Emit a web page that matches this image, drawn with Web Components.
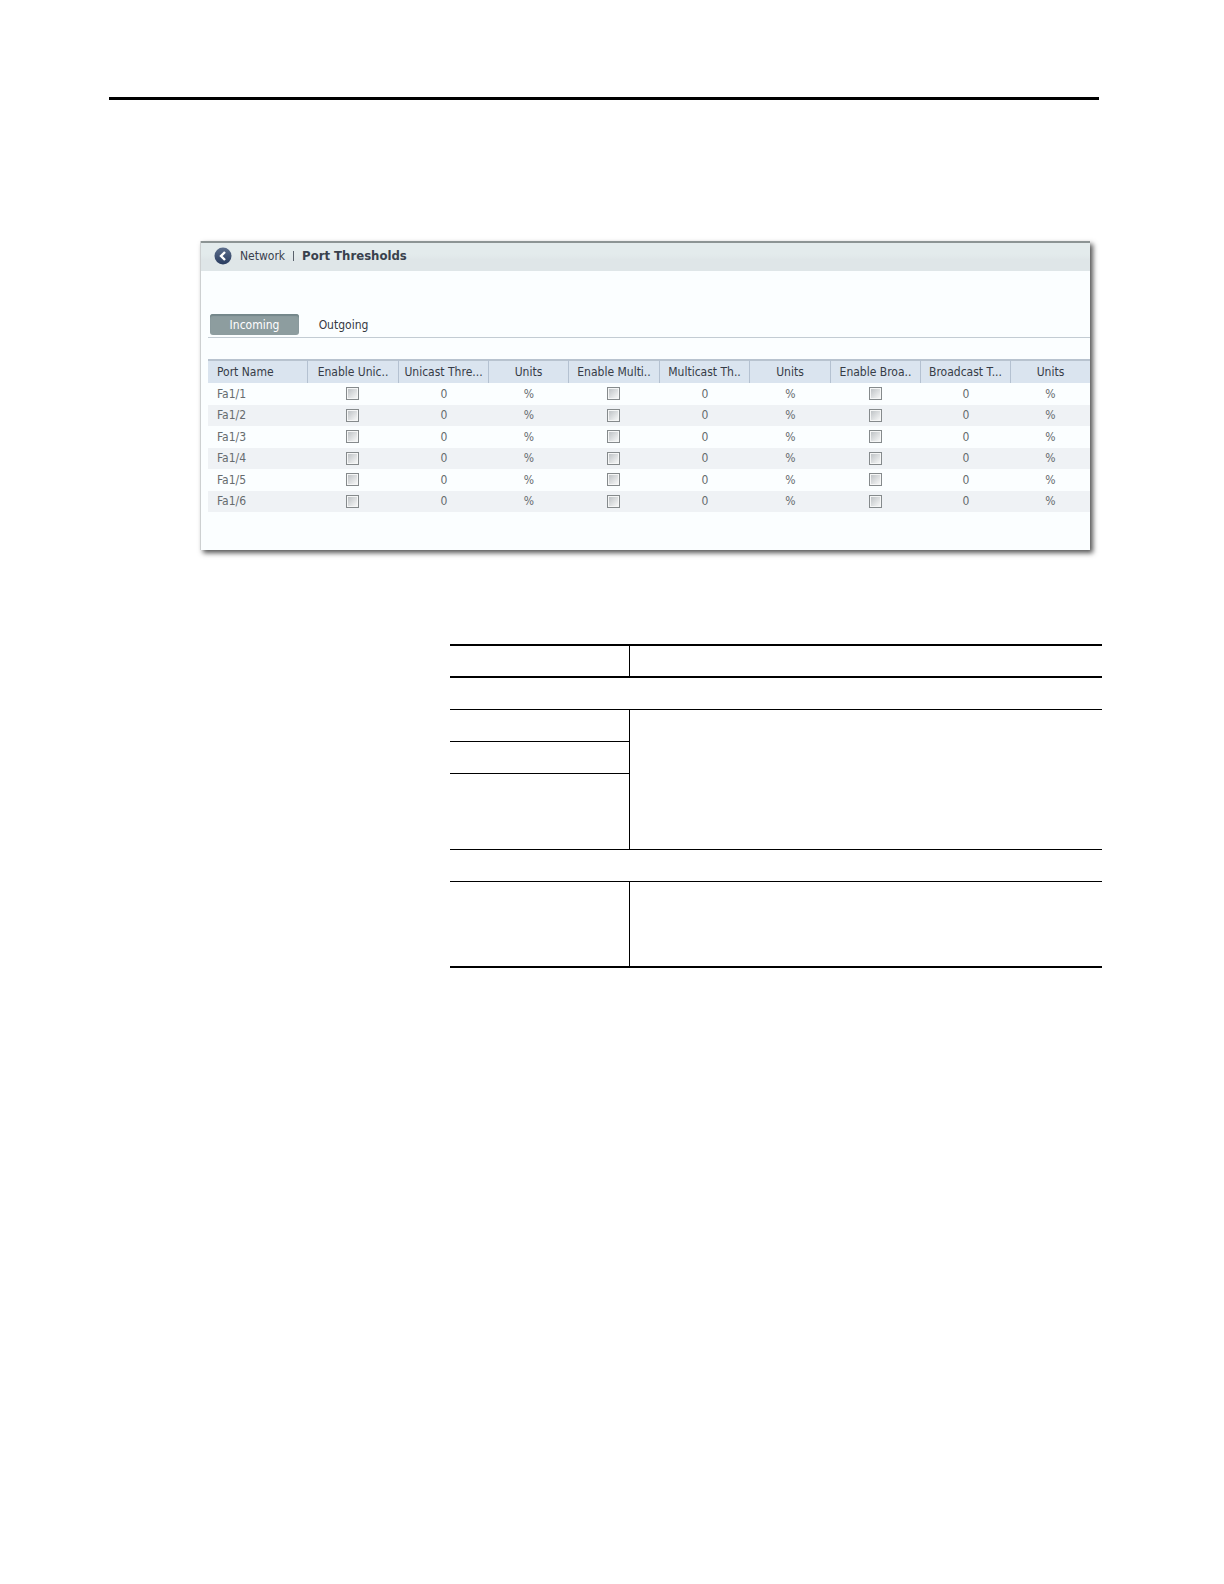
<!DOCTYPE html>
<html lang="en">
<head>
<meta charset="UTF-8">
<meta name="viewport" content="width=device-width, initial-scale=1">
<title>Port Thresholds</title>
<style>
    body {
        margin: 0;
        background: #fff;
        font-family: "DejaVu Sans Condensed", "Noto Sans", sans-serif;
    }
</style>
</head>
<body>
<manual-page>
    <threshold-panel>
        <panel-header slot="header" parent="Network">Port Thresholds</panel-header>
        <tab-bar slot="tabs" active="Incoming"></tab-bar>
        <port-table></port-table>
    </threshold-panel>
    <field-table slot="fields"></field-table>
</manual-page>

<script>
class ManualPageComponent extends HTMLElement {

    constructor() {
        super();
        this.attachShadow({ mode: 'open' });
    }

    connectedCallback() {
        this.shadowRoot.innerHTML = `
            <style>
                :host {
                    display: block;
                    padding: 97px 122px 40px 109px;
                }

                hr {
                    height: 3px;
                    margin: 0 3px 141px 0;
                    border: 0;
                    background: #000;
                }

                .panel {
                    margin: 0 12px 94px 91px;
                }

                .fields {
                    margin-left: 341px;
                }
            </style>
            <hr>
            <div class="panel"><slot></slot></div>
            <div class="fields"><slot name="fields"></slot></div>
        `;
    }
}

class ThresholdPanelComponent extends HTMLElement {

    constructor() {
        super();
        this.attachShadow({ mode: 'open' });
    }

    connectedCallback() {
        this.shadowRoot.innerHTML = `
            <style>
                :host {
                    display: block;
                    border-left: 1px solid #cdd0d1;
                    background: #fbfeff;
                    box-shadow: 3px 3px 5px #555;
                }

                .body {
                    padding: 43px 0 38px 7px;
                }
            </style>
            <slot name="header"></slot>
            <div class="body">
                <slot name="tabs"></slot>
                <slot></slot>
            </div>
        `;
    }
}

class PanelHeaderComponent extends HTMLElement {

    constructor() {
        super();
        this.attachShadow({ mode: 'open' });
    }

    connectedCallback() {
        this.shadowRoot.innerHTML = `
            <style>
                :host {
                    display: flex;
                    align-items: center;
                    height: 26px;
                    padding: 0 13px 2px;
                    border-top: 2px solid #8c9494;
                    background: linear-gradient(#e3ebec 40%, #dfe6e8 60%);
                    color: #39414d;
                    font-size: 12px;
                    line-height: 16px;
                }

                button {
                    width: 18px;
                    height: 18px;
                    margin-right: 8px;
                    padding: 0;
                    border: 0;
                    background: none;
                }

                svg {
                    display: block;
                }

                a {
                    color: inherit;
                    text-decoration: none;
                }

                .divider {
                    width: 1px;
                    height: 10px;
                    margin: 0 8px;
                    background: #59616b;
                }

                h1 {
                    margin: 0;
                    font-size: 13px;
                }
            </style>
            <button type="button" aria-label="Back">
                <svg width="18" height="18" viewBox="0 0 18 18">
                    <defs>
                        <linearGradient id="disc" x1="0" y1="0" x2="0" y2="1">
                            <stop offset="0" stop-color="#5d6f8c"/>
                            <stop offset="1" stop-color="#283b5f"/>
                        </linearGradient>
                    </defs>
                    <circle cx="9" cy="9" r="8.5" fill="url(#disc)"/>
                    <path d="M11 5L7 9l4 4" fill="none" stroke="#fff" stroke-width="2.4"/>
                </svg>
            </button>
            <a href="#network">${this.getAttribute('parent')}</a>
            <span class="divider"></span>
            <h1><slot></slot></h1>
        `;
    }
}

class TabBarComponent extends HTMLElement {

    constructor() {
        super();
        this.attachShadow({ mode: 'open' });
        this.tabs = ['Incoming', 'Outgoing'];
    }

    static get observedAttributes() {
        return ['active'];
    }

    attributeChangedCallback() {
        this.render();
    }

    render() {
        const active = this.getAttribute('active');
        this.shadowRoot.innerHTML = `
            <style>
                :host {
                    display: flex;
                    padding: 0 2px 2px;
                    border-bottom: 1px solid #c3ccd3;
                    margin-bottom: 21px;
                }

                button {
                    width: 89px;
                    height: 21px;
                    padding: 0;
                    border: 0;
                    border-radius: 3px;
                    background: none;
                    color: #35393f;
                    font: inherit;
                    font-size: 12px;
                    line-height: 20px;
                }

                .active {
                    background: #8d9d9f;
                    box-shadow: inset 0 2px 1px #74878a;
                    color: #fff;
                }
            </style>
            ${this.tabs.map(tab => `<button type="button" ${tab === active ? 'class="active"' : ''}>${tab}</button>`).join('')}
        `;
        this.shadowRoot.querySelectorAll('button').forEach(button => {
            button.addEventListener('click', () => this.setAttribute('active', button.textContent));
        });
    }
}

class PortTableComponent extends HTMLElement {

    constructor() {
        super();
        this.attachShadow({ mode: 'open' });
        this.ports = ['Fa1/1', 'Fa1/2', 'Fa1/3', 'Fa1/4', 'Fa1/5', 'Fa1/6'];
        this.columns = [
            { label: 'Port Name', width: 100 },
            { label: 'Enable Unic..', width: 91 },
            { label: 'Unicast Thre...', width: 90 },
            { label: 'Units', width: 80 },
            { label: 'Enable Multi..', width: 91 },
            { label: 'Multicast Th..', width: 90 },
            { label: 'Units', width: 81 },
            { label: 'Enable Broa..', width: 90 },
            { label: 'Broadcast T...', width: 90 },
            { label: 'Units', width: 79 }
        ];
    }

    connectedCallback() {
        this.render();
    }

    renderRow(port) {
        const groups = ['unicast', 'multicast', 'broadcast'].map(type => `
            <td class="check"><input type="checkbox" aria-label="Enable ${type} ${port}"></td>
            <td>0</td>
            <td>%</td>
        `).join('');
        return `<tr><td>${port}</td>${groups}</tr>`;
    }

    render() {
        this.shadowRoot.innerHTML = `
            <style>
                :host {
                    display: block;
                }

                table {
                    width: 100%;
                    table-layout: fixed;
                    border-spacing: 0;
                    font-size: 12px;
                    line-height: 16px;
                }

                th, td {
                    padding: 0;
                    text-align: center;
                    white-space: nowrap;
                }

                th {
                    height: 22px;
                    border-top: 2px solid #b8c3cf;
                    border-right: 1px solid #b4c1d1;
                    background: #dae4ef;
                    color: #363c47;
                    font-weight: normal;
                }

                th:last-child {
                    border-right: 0;
                }

                th:first-child, td:first-child {
                    padding-left: 9px;
                    text-align: left;
                }

                td {
                    height: 21px;
                    padding-bottom: 1px;
                    color: #666b6e;
                }

                tr:nth-child(even) td {
                    height: 20px;
                    background: #eff2f5;
                }

                .check {
                    padding-right: 2px;
                }

                input {
                    appearance: none;
                    display: block;
                    width: 13px;
                    height: 13px;
                    margin: 0 auto;
                    border: 1px solid #858a8c;
                    background: linear-gradient(135deg, #bfc3c6, #f6f7f7) content-box, #f5f6f6;
                    padding: 1px;
                }

                input:checked {
                    background: #4f6684 content-box;
                }
            </style>
            <table>
                <colgroup>${this.columns.map(c => `<col style="width: ${c.width}px">`).join('')}</colgroup>
                <thead><tr>${this.columns.map(c => `<th scope="col">${c.label}</th>`).join('')}</tr></thead>
                <tbody>${this.ports.map(port => this.renderRow(port)).join('')}</tbody>
            </table>
        `;
    }
}

class FieldTableComponent extends HTMLElement {

    constructor() {
        super();
        this.attachShadow({ mode: 'open' });
    }

    connectedCallback() {
        this.shadowRoot.innerHTML = `
            <style>
                :host {
                    display: block;
                }

                table {
                    width: 100%;
                    table-layout: fixed;
                    border-spacing: 0;
                }

                .name {
                    width: 179px;
                }

                th, td {
                    height: 31px;
                    padding: 0;
                    border-bottom: 1px solid #000;
                }

                th {
                    height: 30px;
                    border-top: 2px solid #000;
                    border-bottom-width: 2px;
                }

                .text {
                    border-left: 1px solid #000;
                }

                .tall td {
                    height: 75px;
                }

                .last td {
                    height: 84px;
                    border-bottom-width: 2px;
                }
            </style>
            <table>
                <colgroup><col class="name"><col></colgroup>
                <thead>
                    <tr><th></th><th class="text"></th></tr>
                </thead>
                <tbody>
                    <tr><td colspan="2"></td></tr>
                    <tr><td></td><td class="text" rowspan="3"></td></tr>
                    <tr><td></td></tr>
                    <tr class="tall"><td></td></tr>
                    <tr><td colspan="2"></td></tr>
                    <tr class="last"><td></td><td class="text"></td></tr>
                </tbody>
            </table>
        `;
    }
}

customElements.define('manual-page', ManualPageComponent);
customElements.define('threshold-panel', ThresholdPanelComponent);
customElements.define('panel-header', PanelHeaderComponent);
customElements.define('tab-bar', TabBarComponent);
customElements.define('port-table', PortTableComponent);
customElements.define('field-table', FieldTableComponent);
</script>
</body>
</html>
